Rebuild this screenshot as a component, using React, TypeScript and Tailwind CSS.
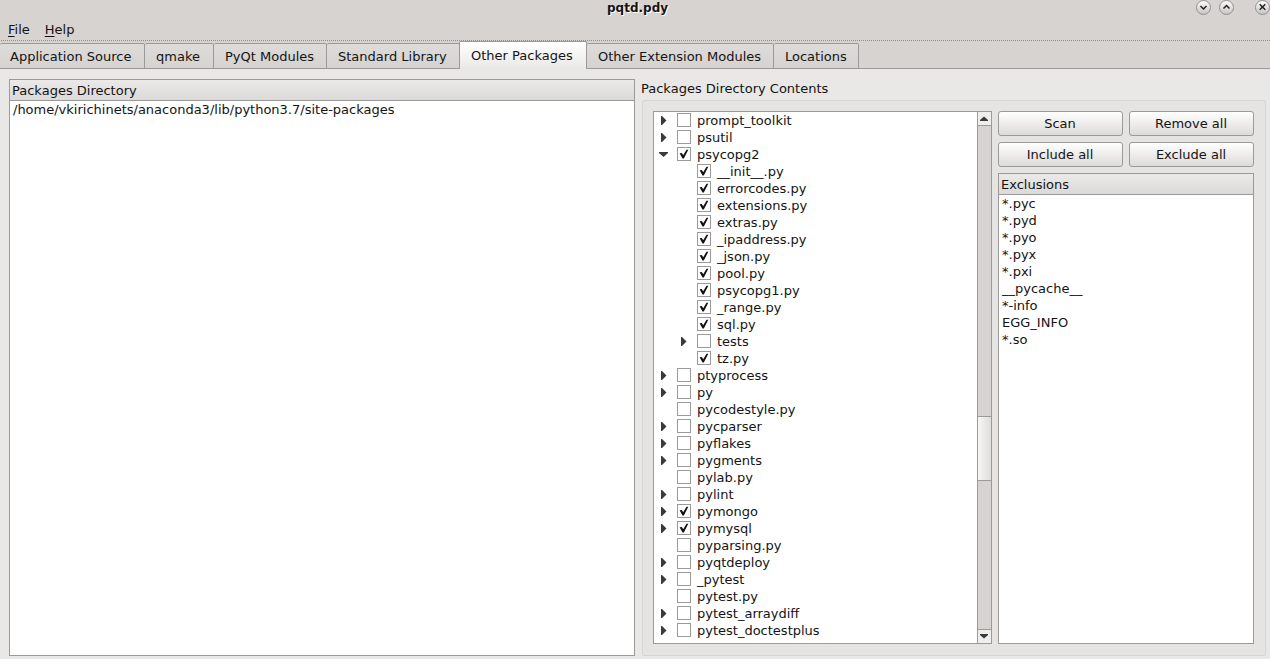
import React from "react";

type Node = { name: string; depth?: number; checked?: boolean; arrow?: "right" | "down" };

const nodes: Node[] = [
  { name: "prompt_toolkit", arrow: "right" },
  { name: "psutil", arrow: "right" },
  { name: "psycopg2", arrow: "down", checked: true },
  { name: "__init__.py", depth: 1, checked: true },
  { name: "errorcodes.py", depth: 1, checked: true },
  { name: "extensions.py", depth: 1, checked: true },
  { name: "extras.py", depth: 1, checked: true },
  { name: "_ipaddress.py", depth: 1, checked: true },
  { name: "_json.py", depth: 1, checked: true },
  { name: "pool.py", depth: 1, checked: true },
  { name: "psycopg1.py", depth: 1, checked: true },
  { name: "_range.py", depth: 1, checked: true },
  { name: "sql.py", depth: 1, checked: true },
  { name: "tests", depth: 1, arrow: "right" },
  { name: "tz.py", depth: 1, checked: true },
  { name: "ptyprocess", arrow: "right" },
  { name: "py", arrow: "right" },
  { name: "pycodestyle.py" },
  { name: "pycparser", arrow: "right" },
  { name: "pyflakes", arrow: "right" },
  { name: "pygments", arrow: "right" },
  { name: "pylab.py" },
  { name: "pylint", arrow: "right" },
  { name: "pymongo", arrow: "right", checked: true },
  { name: "pymysql", arrow: "right", checked: true },
  { name: "pyparsing.py" },
  { name: "pyqtdeploy", arrow: "right" },
  { name: "_pytest", arrow: "right" },
  { name: "pytest.py" },
  { name: "pytest_arraydiff", arrow: "right" },
  { name: "pytest_doctestplus", arrow: "right" },
];

const exclusions = ["*.pyc", "*.pyd", "*.pyo", "*.pyx", "*.pxi", "__pycache__", "*-info", "EGG_INFO", "*.so"];

const tabs = [
  { label: "Application Source", width: "w-[145px] pl-[10px]" },
  { label: "qmake", width: "w-[69px] pl-[11px]" },
  { label: "PyQt Modules", width: "w-[113px] pl-[11px]" },
  { label: "Standard Library", width: "w-[133px] pl-[11px]" },
  { label: "Other Packages", width: "w-[128px] pl-[11px]", active: true },
  { label: "Other Extension Modules", width: "w-[187px] pl-[11px]" },
  { label: "Locations", width: "w-[85px] pl-[11px]" },
];

function TreeRow({ name, depth = 0, checked, arrow }: Node) {
  return (
    <div className={`flex h-[17px] shrink-0 items-start ${depth ? "pl-[23px]" : "pl-[3px]"}`}>
      <svg width="20" height="17" className="shrink-0" fill="#3a3a3a">
        {arrow === "right" && <path d="M4 4h1l4.5 4.5L5 13H4z" />}
        {arrow === "down" && <path d="M2 6h9v1l-4.5 4L2 7z" />}
      </svg>
      <svg width="14" height="14" className="mt-px mr-[6px] shrink-0">
        <rect x="0.5" y="0.5" width="13" height="13" fill="#fff" stroke="#9c9a98" />
        {checked && <path d="M2.6 6.2L4.8 6L6.2 8.2L9.5 2.8L11.3 2.8L6.8 11.4L5.5 11.4Z" fill="#111" />}
      </svg>
      <span className="leading-[17px]">{name}</span>
    </div>
  );
}

function WindowButton({ d, className }: { d: string; className?: string }) {
  return (
    <svg width="16" height="16" className={`shrink-0 ${className ?? ""}`}>
      <circle cx="7.5" cy="7.5" r="7" fill="url(#knob)" stroke="#92908e" strokeWidth="1" />
      <path d={d} fill="none" stroke="#222" strokeWidth="1.5" />
    </svg>
  );
}

function PushButton({ label }: { label: string }) {
  return (
    <button className="h-[25px] w-[125px] rounded-[3px] border border-[#9c9a98] bg-linear-to-b from-white to-[#dddbd9] pt-px pr-px leading-[22px]">
      {label}
    </button>
  );
}

function PaneHeader({ label }: { label: string }) {
  return (
    <div className="h-[21px] shrink-0 border-b border-[#9c9a98] bg-linear-to-b from-[#ebeae8] to-[#dbdad8] pl-[2px] leading-[21px]">
      {label}
    </div>
  );
}

export default function App() {
  return (
    <div className="flex h-[659px] w-[1270px] flex-col overflow-hidden bg-[#e9e8e6] font-['DejaVu_Sans',sans-serif] text-[13px] whitespace-nowrap text-[#141414]">
      <svg width="0" height="0" className="absolute">
        <defs>
          <linearGradient id="knob" x1="0" y1="0" x2="0" y2="1">
            <stop offset="0" stopColor="#fff" />
            <stop offset="1" stopColor="#c5c2bf" />
          </linearGradient>
        </defs>
      </svg>
      <header className="flex h-[40px] shrink-0 flex-col bg-[#d7d3d0]">
        <div className="flex h-[20px] items-start">
          <div className="w-[607px]" />
          <h1 className="flex-1 text-[12px] leading-[16px] font-bold [text-shadow:1px_1px_0_#fff]">pqtd.pdy</h1>
          <WindowButton className="mr-[7px]" d="M4.5 6l3 3l3-3" />
          <WindowButton className="mr-[20px]" d="M4.5 8.5l3-3l3 3" />
          <WindowButton className="-mr-px" d="M4.7 4.2l5.6 5.6M10.3 4.2l-5.6 5.6" />
        </div>
        <nav className="flex h-[20px] gap-[15px] pl-[8px] leading-[20px]">
          <span><span className="underline decoration-1 underline-offset-[2px] [text-decoration-skip-ink:none]">F</span>ile</span>
          <span><span className="underline decoration-1 underline-offset-[2px] [text-decoration-skip-ink:none]">H</span>elp</span>
        </nav>
      </header>
      <div className="flex h-[29px] shrink-0 flex-col bg-[#d7d3d0]">
        <div className="h-px shrink-0 bg-[repeating-linear-gradient(90deg,#d7d3d0_0_1px,#8f8d8b_1px_2px)]" />
        <div className="flex h-[28px] items-end">
          {tabs.map((t) =>
            t.active ? (
              <div key={t.label} className={`-ml-px h-[28px] rounded-t-[2px] border border-b-0 border-[#9c9a98] bg-linear-to-b from-white to-[#e9e8e6] leading-[27px] ${t.width}`}>
                {t.label}
              </div>
            ) : (
              <div key={t.label} className={`h-[26px] rounded-t-[2px] border-t border-r border-b border-[#9c9a98] bg-linear-to-b from-[#dedcda] to-[#d5d2cf] leading-[25px] ${t.width}`}>
                {t.label}
              </div>
            ),
          )}
          <div className="h-px flex-1 bg-[#9c9a98]" />
        </div>
      </div>
      <main className="flex min-h-0 flex-1 pl-[9px]">
        <section className="mt-[10px] flex h-[577px] w-[626px] shrink-0 flex-col border border-[#9c9a98] bg-white">
          <PaneHeader label="Packages Directory" />
          <div className="pl-[3px] leading-[17px]">/home/vkirichinets/anaconda3/lib/python3.7/site-packages</div>
        </section>
        <section className="mt-[10px] ml-[6px] flex w-[625px] flex-col">
          <h2 className="h-[21px] shrink-0 leading-[19px]">Packages Directory Contents</h2>
          <div className="ml-px flex h-[556px] gap-[6px] rounded-[2px] border border-[#d7d5d3] bg-[#e6e4e2] pt-[10px] pl-[10px]">
            <div className="flex h-[533px] w-[339px] border border-[#9c9a98] bg-white">
              <div className="flex flex-1 flex-col overflow-hidden">
                {nodes.map((n) => <TreeRow key={n.name} {...n} />)}
              </div>
              <div className="flex w-[14px] flex-col border-l border-[#9c9a98] bg-[#d7d3d0]">
                <div className="flex h-[14px] justify-center border-b border-[#9c9a98] bg-[#efeeec]">
                  <svg width="13" height="13" fill="#3a3a3a"><path d="M2 9h8v-1L6 4.5L2 8z" /></svg>
                </div>
                <div className="h-[290px]" />
                <div className="h-[65px] border-y border-[#9c9a98] bg-linear-to-r from-[#f7f6f5] to-[#dfdddb]" />
                <div className="flex-1" />
                <div className="flex h-[14px] justify-center border-t border-[#9c9a98] bg-[#efeeec]">
                  <svg width="13" height="13" fill="#3a3a3a"><path d="M2 4h8v1L6 8.5L2 5z" /></svg>
                </div>
              </div>
            </div>
            <div className="flex w-[256px] flex-col">
              <div className="grid grid-cols-2 gap-[6px]">
                <PushButton label="Scan" />
                <PushButton label="Remove all" />
                <PushButton label="Include all" />
                <PushButton label="Exclude all" />
              </div>
              <div className="mt-[6px] flex h-[471px] flex-col border border-[#9c9a98] bg-white">
                <PaneHeader label="Exclusions" />
                {exclusions.map((e) => (
                  <div key={e} className="h-[17px] pl-[3px] leading-[17px]">{e}</div>
                ))}
              </div>
            </div>
          </div>
        </section>
      </main>
    </div>
  );
}
